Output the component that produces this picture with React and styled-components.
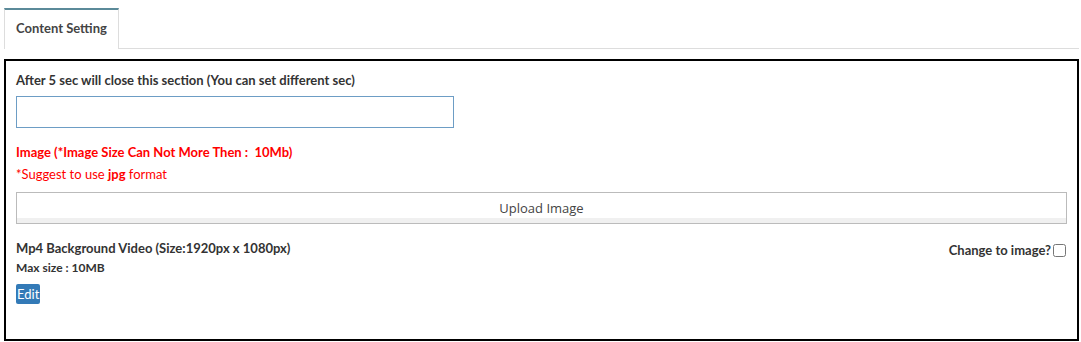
import React from 'react'
import styled, { createGlobalStyle } from 'styled-components'

const Global = createGlobalStyle`
  body {
    margin: 0;
    background: #fff;
    font-family: "Lato", "Noto Sans", sans-serif;
    color: #333;
  }
`

const Page = styled.div`
  padding: 8px 2px 0 4px;
`

const TabBar = styled.div`
  display: flex;
  border-bottom: 1px solid #dddddd;
  height: 40px;
`

const Tab = styled.div`
  display: flex;
  align-items: center;
  width: 115px;
  height: 41px;
  box-sizing: border-box;
  padding: 0 0 4px 11px;
  border-top: 2px solid #5b8a99;
  border-left: 1px solid #dddddd;
  border-right: 1px solid #dddddd;
  background: #fff;
  font-size: 13px;
  font-weight: 700;
  color: #444;
`

const Panel = styled.div`
  margin-top: 10px;
  border: 2px solid #000;
  width: 1075px;
  height: 282px;
  box-sizing: border-box;
  padding: 10px 10px 0 10px;
  display: flex;
  flex-direction: column;
  align-items: flex-start;
`

const Label = styled.div`
  font-size: ${p => p.size || 13}px;
  line-height: 18px;
  font-weight: ${p => (p.light ? 400 : 700)};
  color: ${p => (p.red ? '#ff0000' : '#333')};
  margin-top: ${p => p.gap || 0}px;
  b { font-weight: 700; }
`

const TextInput = styled.input`
  margin-top: 7px;
  width: 438px;
  height: 32px;
  box-sizing: border-box;
  border: 1px solid #6d9dc5;
  outline: none;
`

const UploadButton = styled.button`
  margin-top: 9px;
  width: 1051px;
  height: 32px;
  box-sizing: border-box;
  border: 1px solid #bbbbbb;
  background: linear-gradient(#fff 0, #fff 82%, #f0f0f0 82%, #f0f0f0 100%);
  font-family: "Open Sans", sans-serif;
  font-size: 13px;
  color: #444;
`

const VideoRow = styled.div`
  margin-top: 15px;
  align-self: stretch;
  display: flex;
  justify-content: space-between;
  align-items: flex-start;
`

const Info = styled.div`
  display: flex;
  flex-direction: column;
  align-items: flex-start;
`

const Toggle = styled.label`
  display: flex;
  align-items: center;
  gap: 2px;
  margin-top: 3px;
  font-size: 13px;
  font-weight: 700;
  color: #333;
  input { margin: 0 1px 0 0; width: 13px; height: 13px; }
`

const EditButton = styled.button`
  margin-top: 7px;
  height: 20px;
  padding: 0 1px;
  border: none;
  border-radius: 2px;
  background: #337ab7;
  color: #fff;
  font-family: "Lato", sans-serif;
  font-size: 13px;
`

export default function App() {
  return (
    <Page>
      <Global />
      <TabBar>
        <Tab>Content Setting</Tab>
      </TabBar>
      <Panel>
        <Label>After 5 sec will close this section (You can set different sec)</Label>
        <TextInput type="text" />
        <Label red gap={15}>Image (*Image Size Can Not More Then :&nbsp; 10Mb)</Label>
        <Label red light gap={4}>*Suggest to use <b>jpg</b> format</Label>
        <UploadButton>Upload Image</UploadButton>
        <VideoRow>
          <Info>
            <Label>Mp4 Background Video (Size:1920px x 1080px)</Label>
            <Label size={12} gap={2}>Max size : 10MB</Label>
            <EditButton>Edit</EditButton>
          </Info>
          <Toggle>
            Change to image?<input type="checkbox" />
          </Toggle>
        </VideoRow>
      </Panel>
    </Page>
  )
}
